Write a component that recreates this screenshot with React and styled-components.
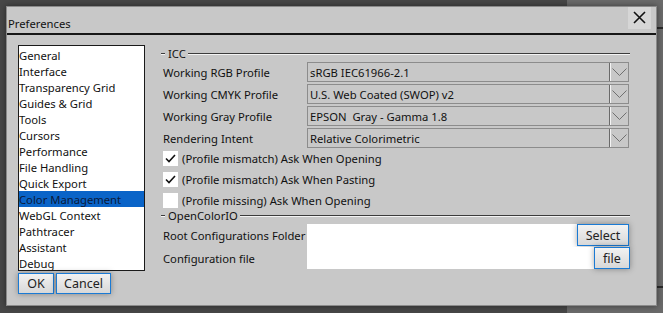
import React from "react";
import styled, { createGlobalStyle } from "styled-components";

const Global = createGlobalStyle`
  html, body { margin: 0; padding: 0; background: #4a4a4a; }
  body { font-family: "Noto Sans", "Open Sans", sans-serif; font-size: 11.25px; color: #111; }
  * { box-sizing: border-box; }
`;

const Desktop = styled.div`
  position: relative;
  width: 663px;
  height: 313px;
  overflow: hidden;
  background: #474747;
`;

const BackWindow = styled.div`
  position: absolute;
  left: 567px;
  top: 0;
  width: 120px;
  height: 313px;
  background: #6a6a6a;
`;

const BackLine = styled.div`
  position: absolute;
  left: 650px;
  right: 0;
  top: ${(p) => p.$top}px;
  height: 2px;
  background: #2a2a2a;
`;

const Dialog = styled.div`
  position: absolute;
  left: 6px;
  top: 6px;
  width: 651px;
  height: 300px;
  background: #c8c8c8;
  border: 1px solid #8a8a8a;
  box-shadow: 0 0 6px rgba(0, 0, 0, 0.45);
  display: flex;
  flex-direction: column;
`;

const TitleBar = styled.div`
  height: 28px;
  border-bottom: 2px solid #161616;
  display: flex;
  align-items: center;
  justify-content: space-between;
  padding-left: 1px;
`;

const Title = styled.span`
  margin-top: 7px;
`;

const CloseButton = styled.div`
  width: 23px;
  height: 22px;
  margin-right: 5px;
  margin-top: -5px;
  background: #d6d6d6;
  display: flex;
  align-items: center;
  justify-content: center;
`;

const Body = styled.div`
  display: flex;
  padding: 10px 0 0 11px;
  flex: 1;
`;

const LeftCol = styled.div`
  width: 127px;
  display: flex;
  flex-direction: column;
  gap: 2px;
`;

const List = styled.div`
  height: 226px;
  background: #fff;
  border: 1px solid #1a1a1a;
  padding-top: 1px;
  display: flex;
  flex-direction: column;
  overflow: hidden;
`;

const ListItem = styled.div`
  height: 16px;
  line-height: 17px;
  white-space: nowrap;
  background: ${(p) => (p.$selected ? "#0a64c8" : "transparent")};
  color: ${(p) => (p.$selected ? "#0a1a3a" : "#111")};
`;

const ButtonRow = styled.div`
  display: flex;
  gap: 2px;
`;

const Button = styled.div`
  width: ${(p) => p.$w}px;
  height: ${(p) => p.$h || 22}px;
  border: 1px solid #1a7ad4;
  background: linear-gradient(#f2f2f2, #d8d8d8);
  box-shadow: 0 0 6px rgba(0, 0, 0, 0.35);
  display: flex;
  align-items: center;
  justify-content: center;
  font-size: 12.5px;
  color: #222;
  flex: none;
`;

const RightCol = styled.div`
  margin-left: 16px;
  width: 469px;
  display: flex;
  flex-direction: column;
`;

const GroupHeader = styled.div`
  display: flex;
  align-items: center;
  height: 14px;
  margin-top: ${(p) => p.$mt || 0}px;
  margin-bottom: ${(p) => p.$mb || 0}px;
`;

const Etch = styled.div`
  height: 2px;
  border-top: 1px solid #3c3c3c;
  border-bottom: 1px solid #f4f4f4;
  width: ${(p) => (p.$w ? p.$w + "px" : "auto")};
  flex: ${(p) => (p.$w ? "none" : 1)};
`;

const GroupTitle = styled.span`
  padding: 0 2px 0 3px;
  line-height: 14px;
`;

const FormRow = styled.div`
  display: grid;
  grid-template-columns: 146px 322px;
  align-items: center;
  height: 22px;
`;

const Label = styled.span`
  padding-left: 2px;
  white-space: nowrap;
`;

const Combo = styled.div`
  height: 20px;
  border: 1px solid #8c8c8c;
  display: flex;
  align-items: center;
  background: #c8c8c8;
`;

const ComboText = styled.span`
  flex: 1;
  padding-left: 2px;
  white-space: pre;
`;

const ComboArrow = styled.div`
  width: 19px;
  height: 18px;
  border-left: 1px solid #6a6a6a;
  box-shadow: inset 1px 0 0 #f4f4f4;
  display: flex;
  align-items: center;
  justify-content: center;
`;

const Checks = styled.div`
  display: flex;
  flex-direction: column;
  gap: 5px;
  margin-top: 1px;
  padding-left: 2px;
`;

const CheckRow = styled.div`
  display: flex;
  align-items: center;
  gap: 4px;
  height: 16px;
`;

const Box = styled.div`
  width: 15px;
  height: 15px;
  background: #fff;
  display: flex;
  align-items: center;
  justify-content: center;
`;

const InputRows = styled.div`
  display: flex;
  flex-direction: column;
  margin-top: 1px;
`;

const InputRow = styled.div`
  display: grid;
  grid-template-columns: 146px 1fr;
  align-items: stretch;
  height: ${(p) => p.$h}px;
`;

const InputLabel = styled.span`
  padding-left: 2px;
  display: flex;
  align-items: center;
  white-space: nowrap;
`;

const FieldWrap = styled.div`
  display: flex;
  align-items: flex-start;
  background: #fff;
  margin-right: ${(p) => p.$mr || 0}px;
`;

const Field = styled.div`
  flex: 1;
  align-self: stretch;
`;

const Chevron = () => (
  <svg width="15" height="8" viewBox="0 0 15 8">
    <polyline points="0.5,0.5 7.5,7.5 14.5,0.5" fill="none" stroke="#707070" strokeWidth="1" />
  </svg>
);

const Check = () => (
  <svg width="11" height="9" viewBox="0 0 11 9">
    <polyline points="1,4.5 4,7.5 10,1" fill="none" stroke="#111" strokeWidth="1.6" />
  </svg>
);

const items = [
  "General",
  "Interface",
  "Transparency Grid",
  "Guides & Grid",
  "Tools",
  "Cursors",
  "Performance",
  "File Handling",
  "Quick Export",
  "Color Management",
  "WebGL Context",
  "Pathtracer",
  "Assistant",
  "Debug",
];

const combos = [
  ["Working RGB Profile", "sRGB IEC61966-2.1"],
  ["Working CMYK Profile", "U.S. Web Coated (SWOP) v2"],
  ["Working Gray Profile", "EPSON  Gray - Gamma 1.8"],
  ["Rendering Intent", "Relative Colorimetric"],
];

const checks = [
  ["(Profile mismatch) Ask When Opening", true],
  ["(Profile mismatch) Ask When Pasting", true],
  ["(Profile missing) Ask When Opening", false],
];

export default function App() {
  return (
    <>
      <Global />
      <Desktop>
        <BackWindow />
        <BackLine $top={27} />
        <BackLine $top={286} />
        <Dialog>
          <TitleBar>
            <Title>Preferences</Title>
            <CloseButton>
              <svg width="13" height="13" viewBox="0 0 13 13">
                <path d="M1 1 L12 12 M12 1 L1 12" stroke="#111" strokeWidth="1.6" />
              </svg>
            </CloseButton>
          </TitleBar>
          <Body>
            <LeftCol>
              <List>
                {items.map((it) => (
                  <ListItem key={it} $selected={it === "Color Management"}>
                    {it}
                  </ListItem>
                ))}
              </List>
              <ButtonRow>
                <Button $w={36} $h={21}>OK</Button>
                <Button $w={55} $h={21}>Cancel</Button>
              </ButtonRow>
            </LeftCol>
            <RightCol>
              <GroupHeader $mt={2}>
                <Etch $w={4} />
                <GroupTitle>ICC</GroupTitle>
                <Etch />
              </GroupHeader>
              {combos.map(([l, v]) => (
                <FormRow key={l}>
                  <Label>{l}</Label>
                  <Combo>
                    <ComboText>{v}</ComboText>
                    <ComboArrow>
                      <Chevron />
                    </ComboArrow>
                  </Combo>
                </FormRow>
              ))}
              <Checks>
                {checks.map(([l, c]) => (
                  <CheckRow key={l}>
                    <Box>{c && <Check />}</Box>
                    <span>{l}</span>
                  </CheckRow>
                ))}
              </Checks>
              <GroupHeader $mt={1}>
                <Etch $w={4} />
                <GroupTitle>OpenColorIO</GroupTitle>
                <Etch />
              </GroupHeader>
              <InputRows>
                <InputRow $h={23}>
                  <InputLabel>Root Configurations Folder</InputLabel>
                  <FieldWrap $mr={1}>
                    <Field />
                    <Button $w={52} $h={22}>Select</Button>
                  </FieldWrap>
                </InputRow>
                <InputRow $h={22}>
                  <InputLabel>Configuration file</InputLabel>
                  <FieldWrap>
                    <Field />
                    <Button $w={36} $h={22}>file</Button>
                  </FieldWrap>
                </InputRow>
              </InputRows>
            </RightCol>
          </Body>
        </Dialog>
      </Desktop>
    </>
  );
}
